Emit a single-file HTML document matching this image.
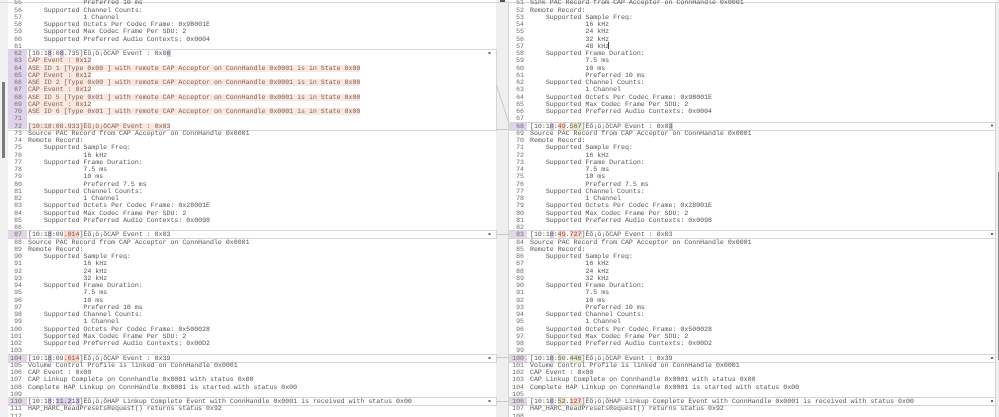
<!DOCTYPE html>
<html>
<head>
<meta charset="utf-8">
<style>
html,body{margin:0;padding:0;background:#fff}
#r{position:relative;width:999px;height:417px;overflow:hidden;background:#fff}
pre{position:absolute;margin:0;font-family:"Liberation Mono",monospace;font-size:6.6px;line-height:7.25px;color:#555;text-rendering:geometricPrecision;top:-.625px;filter:blur(.35px)}
.n{text-align:right;color:#6e6e6e}
.b{position:absolute}
.p{background:#fae7e0;color:#7d6356}
.d{background:#dccfec}
.e{background:#f5d9d2;color:#96503f}
.y{background:#eeebc8}
</style>
</head>
<body>
<div id="r">
<div class="b" style="left:0;top:0;width:8px;height:417px;background:#f1f1f1"></div>
<div class="b" style="left:2px;top:82px;width:3px;height:76px;background:#7c7c7c"></div>
<div class="b" style="left:496px;top:0;width:12px;height:417px;background:#efefef"></div>
<div class="b" style="left:996px;top:0;width:3px;height:417px;background:#efefef"></div>
<div class="b" style="left:998px;top:172px;width:1px;height:188px;background:#8a8a8a"></div>
<div class="b" style="left:0;top:2px;width:999px;height:1px;background:#d8d8d8"></div>
<div class="b" style="left:500px;top:0;width:5px;height:2px;background:#555"></div>
<div class="b" style="left:508px;top:3px;width:1px;height:414px;background:#d6d6d6"></div>
<div class="b" style="left:995px;top:3px;width:1px;height:414px;background:#d6d6d6"></div>

<div class="b" style="left:8px;top:49px;width:488px;height:80px;border:solid #d6d6d6;border-width:1px 1px 1px 0"></div>
<div class="b" style="left:8px;top:50px;width:19px;height:79px;background:#dfd4ec"></div>
<div class="b" style="left:8px;top:230px;width:488px;height:7px;border:solid #d6d6d6;border-width:1px 1px 1px 0"></div>
<div class="b" style="left:8px;top:231px;width:19px;height:7px;background:#e4d5e8"></div>
<div class="b" style="left:8px;top:354px;width:488px;height:7px;border:solid #d6d6d6;border-width:1px 1px 1px 0"></div>
<div class="b" style="left:8px;top:355px;width:19px;height:7px;background:#e4d5e8"></div>
<div class="b" style="left:8px;top:397px;width:488px;height:7px;border:solid #d6d6d6;border-width:1px 1px 1px 0"></div>
<div class="b" style="left:8px;top:398px;width:19px;height:7px;background:#e4d5e8"></div>

<div class="b" style="left:509px;top:122px;width:486px;height:7px;border-top:1px solid #d6d6d6;border-bottom:1px solid #d6d6d6"></div>
<div class="b" style="left:509px;top:123px;width:18px;height:7px;background:#dfd4ec"></div>
<div class="b" style="left:509px;top:230px;width:486px;height:7px;border-top:1px solid #d6d6d6;border-bottom:1px solid #d6d6d6"></div>
<div class="b" style="left:509px;top:231px;width:18px;height:7px;background:#e4d5e8"></div>
<div class="b" style="left:509px;top:354px;width:486px;height:7px;border-top:1px solid #d6d6d6;border-bottom:1px solid #d6d6d6"></div>
<div class="b" style="left:509px;top:355px;width:18px;height:7px;background:#e4d5e8"></div>
<div class="b" style="left:509px;top:397px;width:486px;height:7px;border-top:1px solid #d6d6d6;border-bottom:1px solid #d6d6d6"></div>
<div class="b" style="left:509px;top:398px;width:18px;height:7px;background:#e4d5e8"></div>

<svg class="b" style="left:0;top:0" width="999" height="417">
<g stroke="#c8c8c8" stroke-width="1" fill="none">
<path d="M496.5 85L508.5 122M496.5 129.5H508.5M496.5 234.5H508.5M496.5 357.5H508.5M496.5 401.5H508.5"/>
</g>
<g fill="#666">
<rect x="488.5" y="52" width="2" height="2"/>
<rect x="488.5" y="233" width="2" height="2"/>
<rect x="488.5" y="357" width="2" height="2"/>
<rect x="488.5" y="400" width="2" height="2"/>
<rect x="991" y="124.5" width="2" height="2"/>
<rect x="991" y="233" width="2" height="2"/>
<rect x="991" y="357" width="2" height="2"/>
<rect x="991" y="400" width="2" height="2"/>
</g>
<rect x="608" y="42" width="1" height="7" fill="#444"/>
</svg>

<pre class="n" style="left:8px;width:14px">55
56
57
58
59
60
61
62
63
64
65
66
67
68
69
70
71
72
73
74
75
76
77
78
79
80
81
82
83
84
85
86
87
88
89
90
91
92
93
94
95
96
97
98
99
100
101
102
103
104
105
106
107
108
109
110
111
112</pre>

<pre style="left:28px">              Preferred 10 ms
    Supported Channel Counts:
              1 Channel
    Supported Octets Per Codec Frame: 0x9B001E
    Supported Max Codec Frame Per SDU: 2
    Supported Preferred Audio Contexts: 0x0004

[10:1<span class="d">8</span>:0<span class="d">8</span>.735]Èõ¡ö¡õCAP Event : 0x0<span class="d">6</span>
<span class="p">CAP Event : 0x12</span>
<span class="p">ASE ID 1 [Type 0x00 ] with remote CAP Acceptor on ConnHandle 0x0001 is in State 0x00</span>
<span class="p">CAP Event : 0x12</span>
<span class="p">ASE ID 2 [Type 0x00 ] with remote CAP Acceptor on ConnHandle 0x0001 is in State 0x00</span>
<span class="p">CAP Event : 0x12</span>
<span class="p">ASE ID 5 [Type 0x01 ] with remote CAP Acceptor on ConnHandle 0x0001 is in State 0x00</span>
<span class="p">CAP Event : 0x12</span>
<span class="p">ASE ID 6 [Type 0x01 ] with remote CAP Acceptor on ConnHandle 0x0001 is in State 0x00</span>

<span class="p">[10:18:08.933]Èõ¡ö¡õCAP Event : 0x03</span>
Source PAC Record from CAP Acceptor on ConnHandle 0x0001
Remote Record:
    Supported Sample Freq:
              16 kHz
    Supported Frame Duration:
              7.5 ms
              10 ms
              Preferred 7.5 ms
    Supported Channel Counts:
              1 Channel
    Supported Octets Per Codec Frame: 0x28001E
    Supported Max Codec Frame Per SDU: 2
    Supported Preferred Audio Contexts: 0x0098

[10:1<span class="d">8</span>:09<span class="e">.014</span>]Èõ¡ö¡õCAP Event : 0x03
Source PAC Record from CAP Acceptor on ConnHandle 0x0001
Remote Record:
    Supported Sample Freq:
              16 kHz
              24 kHz
              32 kHz
    Supported Frame Duration:
              7.5 ms
              10 ms
              Preferred 10 ms
    Supported Channel Counts:
              1 Channel
    Supported Octets Per Codec Frame: 0x500028
    Supported Max Codec Frame Per SDU: 2
    Supported Preferred Audio Contexts: 0x00D2

[10:1<span class="d">8</span>:09<span class="e">.614</span>]Èõ¡ö¡õCAP Event : 0x39
Volume Control Profile is linked on ConnHandle 0x0001
CAP Event : 0x00
CAP Linkup Complete on Connhandle 0x0001 with status 0x00
Complete HAP Linkup on ConnHandle 0x0001 is started with status 0x00

[10:1<span class="d">8</span>:<span class="d">11.2</span>1<span class="d">3</span>]Èõ¡ö¡õHAP Linkup Complete Event with ConnHandle 0x0001 is received with status 0x00
HAP_HARC_ReadPresetsRequest() returns status 0x92
</pre>

<pre class="n" style="left:509px;width:15px">51
52
53
54
55
56
57
58
59
60
61
62
63
64
65
66
67
68
69
70
71
72
73
74
75
76
77
78
79
80
81
82
83
84
85
86
87
88
89
90
91
92
93
94
95
96
97
98
99
100
101
102
103
104
105
106
107
108</pre>

<pre style="left:530px">Sink PAC Record from CAP Acceptor on ConnHandle 0x0001
Remote Record:
    Supported Sample Freq:
              16 kHz
              24 kHz
              32 kHz
              48 kHz
    Supported Frame Duration:
              7.5 ms
              10 ms
              Preferred 10 ms
    Supported Channel Counts:
              1 Channel
    Supported Octets Per Codec Frame: 0x9B001E
    Supported Max Codec Frame Per SDU: 2
    Supported Preferred Audio Contexts: 0x0004

[10:1<span class="d">0</span>:<span class="e">49</span>.<span class="y">567</span>]Èõ¡ö¡õCAP Event : 0x0<span class="d">3</span>
Source PAC Record from CAP Acceptor on ConnHandle 0x0001
Remote Record:
    Supported Sample Freq:
              16 kHz
    Supported Frame Duration:
              7.5 ms
              10 ms
              Preferred 7.5 ms
    Supported Channel Counts:
              1 Channel
    Supported Octets Per Codec Frame: 0x28001E
    Supported Max Codec Frame Per SDU: 2
    Supported Preferred Audio Contexts: 0x0098

[10:1<span class="d">0</span>:<span class="e">49</span>.<span class="e">727</span>]Èõ¡ö¡õCAP Event : 0x03
Source PAC Record from CAP Acceptor on ConnHandle 0x0001
Remote Record:
    Supported Sample Freq:
              16 kHz
              24 kHz
              32 kHz
    Supported Frame Duration:
              7.5 ms
              10 ms
              Preferred 10 ms
    Supported Channel Counts:
              1 Channel
    Supported Octets Per Codec Frame: 0x500028
    Supported Max Codec Frame Per SDU: 2
    Supported Preferred Audio Contexts: 0x00D2

[10:1<span class="d">0</span>:<span class="y">5</span>0.<span class="y">446</span>]Èõ¡ö¡õCAP Event : 0x39
Volume Control Profile is linked on ConnHandle 0x0001
CAP Event : 0x00
CAP Linkup Complete on Connhandle 0x0001 with status 0x00
Complete HAP Linkup on ConnHandle 0x0001 is started with status 0x00

[10:1<span class="d">0</span>:<span class="y">52</span>.<span class="e">127</span>]Èõ¡ö¡õHAP Linkup Complete Event with ConnHandle 0x0001 is received with status 0x00
HAP_HARC_ReadPresetsRequest() returns status 0x92
</pre>
</div>
</body>
</html>
